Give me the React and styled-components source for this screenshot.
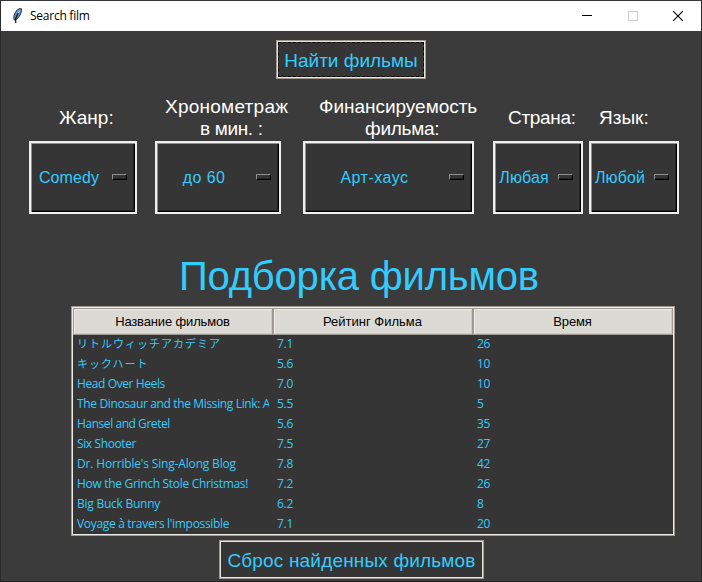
import React from "react";
import styled, { createGlobalStyle } from "styled-components";

const GlobalStyle = createGlobalStyle`
  * { box-sizing: border-box; }
  body { margin: 0; background: #3b3b3b; }
  button { margin: 0; padding: 0; border: 0; background: none; }
`;

const Window = styled.main`
  width: 702px;
  height: 582px;
  display: flex;
  flex-direction: column;
  border: 1px solid #2b2b2d;
  border-top-color: #36363f;
  border-bottom-color: #222222;
  background: #3b3b3b;
  font-family: "Liberation Sans", Arial, sans-serif;
  overflow: hidden;
`;

const TitleBar = styled.header`
  height: 30px;
  flex: none;
  display: flex;
  align-items: center;
  padding-left: 8px;
  background: #ffffff;
`;

const AppIcon = styled.svg`
  width: 16px;
  height: 16px;
  flex: none;
`;

const WindowTitle = styled.h1`
  margin: 0 auto 0 5px;
  font: 400 12px/16px "Open Sans", "Noto Sans", sans-serif;
  letter-spacing: -0.25px;
  color: #000000;
`;

const Caption = styled.button`
  width: 45.5px;
  height: 30px;
  display: flex;
  align-items: center;
  justify-content: center;
`;

const ActionButton = styled.button`
  flex: none;
  align-self: flex-start;
  width: ${(p) => p.$width}px;
  height: 39px;
  margin: ${(p) => p.$top}px 0 0 ${(p) => p.$left}px;
  border: 1px solid #9e9a91;
  box-shadow: inset 0 0 0 1px #e8e5df;
  padding: 1px;
  background: #353535;
`;

const ActionFace = styled.span`
  height: 100%;
  display: flex;
  align-items: center;
  justify-content: center;
  padding-top: 2px;
  border: 1px ${(p) => (p.$focused ? "dashed #000000" : "solid transparent")};
  color: #33ccff;
  font: 400 19px/22px "Liberation Sans", Arial, sans-serif;
  letter-spacing: ${(p) => p.$spacing}px;
  white-space: nowrap;
`;

const Filters = styled.section`
  flex: none;
  display: flex;
  height: 135px;
  padding-left: 28px;
`;

const Field = styled.div`
  width: ${(p) => p.$width}px;
  margin-right: ${(p) => p.$gap}px;
  flex: none;
  display: flex;
  flex-direction: column;
`;

const Label = styled.div`
  height: 62px;
  padding-top: 16px;
  display: flex;
  flex-direction: column;
  justify-content: center;
  color: #ffffff;
  font-size: 19px;
  line-height: 22px;
  white-space: nowrap;
`;

const LabelLine = styled.span`
  margin-left: ${(p) => p.$left}px;
  letter-spacing: ${(p) => p.$spacing || 0}px;
`;

const Select = styled.button`
  width: 100%;
  height: 73px;
  border: 2px solid #f0f0f0;
  box-shadow: inset 1px 1px 0 #8f8f8f, inset -1px -1px 0 #000000, inset -2px -2px 0 #222222;
  display: flex;
  align-items: center;
  padding: 0 8px 0 1px;
  background: #353535;
`;

const SelectValue = styled.span`
  flex: 1;
  text-align: center;
  color: #33ccff;
  font: 400 16px/18px "Liberation Sans", Arial, sans-serif;
  letter-spacing: ${(p) => p.$spacing}px;
  margin-right: 6px;
  white-space: nowrap;
`;

const Indicator = styled.span`
  width: 15px;
  height: 6px;
  flex: none;
  margin-bottom: 1px;
  border: 1px solid #000000;
  border-top-color: #8f8f8f;
  border-left-color: #8f8f8f;
  box-shadow: inset -1px -1px 0 #222222;
`;

const Heading = styled.h2`
  margin: 39px 0 7px 178px;
  flex: none;
  color: #33ccff;
  font-weight: 400;
  font-size: 40px;
  line-height: 46px;
  letter-spacing: -0.2px;
  white-space: nowrap;
`;

const Table = styled.section`
  flex: none;
  width: 604px;
  height: 230px;
  margin-left: 70px;
  border: 1px solid #9e9a91;
  box-shadow: inset 0 0 0 1px #eeebe7;
  padding: 1px;
  background: #353535;
`;

const HeaderRow = styled.div`
  display: grid;
  grid-template-columns: repeat(3, 200px);
  height: 26px;
`;

const HeaderCell = styled.div`
  border: 1px solid #9e9a91;
  box-shadow: inset 1px 1px 0 #eeebe7, inset -1px -1px 0 #cfcbc3;
  background: #dcdad5;
  color: #000000;
  font-size: 13px;
  line-height: 25px;
  padding-right: 1px;
  letter-spacing: ${(p) => p.$spacing}px;
  text-align: center;
`;

const Row = styled.div`
  display: grid;
  grid-template-columns: repeat(3, 200px);
  height: 20px;
`;

const Cell = styled.div`
  margin: 0 4px;
  height: 20px;
  overflow: hidden;
  white-space: nowrap;
  color: #33ccff;
  font: 400 ${(p) => p.$size || 12}px/20px "Open Sans", "Noto Sans", "Noto Sans CJK JP", sans-serif;
  letter-spacing: ${(p) => p.$spacing || 0}px;
`;

const filters = [
  { lines: [["Жанр:", 30]], value: "Comedy", spacing: 0.1, width: 108, gap: 18 },
  { lines: [["Хронометраж", 10, 0.25], ["в мин. :", 45, -0.35]], value: "до 60", spacing: 0.4, width: 126, gap: 22 },
  { lines: [["Финансируемость", 16, -0.03], ["фильма:", 62, -0.25]], value: "Арт-хаус", spacing: 0.5, width: 171, gap: 19 },
  { lines: [["Страна:", 15, -0.3]], value: "Любая", spacing: 0.1, width: 90, gap: 6 },
  { lines: [["Язык:", 10]], value: "Любой", spacing: 0.1, width: 90, gap: 0 },
];

const films = [
  { name: "リトルウィッチアカデミア", rating: "7.1", time: "26", size: 11, spacing: 1 },
  { name: "キックハート", rating: "5.6", time: "10", size: 11, spacing: 1 },
  { name: "Head Over Heels", rating: "7.0", time: "10", spacing: -0.4 },
  { name: "The Dinosaur and the Missing Link: A", rating: "5.5", time: "5", spacing: -0.36 },
  { name: "Hansel and Gretel", rating: "5.6", time: "35", spacing: -0.44 },
  { name: "Six Shooter", rating: "7.5", time: "27", spacing: -0.38 },
  { name: "Dr. Horrible's Sing-Along Blog", rating: "7.8", time: "42", spacing: -0.17 },
  { name: "How the Grinch Stole Christmas!", rating: "7.2", time: "26", spacing: -0.31 },
  { name: "Big Buck Bunny", rating: "6.2", time: "8", spacing: -0.25 },
  { name: "Voyage à travers l'impossible", rating: "7.1", time: "20", spacing: -0.32 },
];

function Feather() {
  return (
    <AppIcon viewBox="0 0 16 16">
      <path d="M5.2 12C4 8.500 6 3 10 .8c1-.5 2.500-.6 2.500.2C12.500 5 10.500 9.500 6.500 12z" fill="#5b93d3" stroke="#252b33" strokeWidth="1" />
      <path d="M10.800 2.500 8.500 6" stroke="#bcd8f2" strokeWidth="1" fill="none" />
      <path d="M9.200 5 6.700 10.500V15" stroke="#111111" strokeWidth="1.200" fill="none" />
    </AppIcon>
  );
}

export default function App() {
  return (
    <>
      <GlobalStyle />
      <Window>
        <TitleBar>
          <Feather />
          <WindowTitle>Search film</WindowTitle>
          <Caption aria-label="Minimize">
            <svg width="10" height="10" shapeRendering="crispEdges">
              <path d="M0 4h10v1H0z" fill="#000" />
            </svg>
          </Caption>
          <Caption aria-label="Maximize">
            <svg width="10" height="10" shapeRendering="crispEdges">
              <path d="M.5 .5h9v9h-9z" fill="none" stroke="#cccccc" />
            </svg>
          </Caption>
          <Caption aria-label="Close">
            <svg width="10" height="10">
              <path d="M0 0 10 10M10 0 0 10" stroke="#000" strokeWidth="1.1" />
            </svg>
          </Caption>
        </TitleBar>
        <ActionButton $width={150} $top={9} $left={275}>
          <ActionFace $focused $spacing={0}>Найти фильмы</ActionFace>
        </ActionButton>
        <Filters>
          {filters.map((f) => (
            <Field key={f.value} $width={f.width} $gap={f.gap}>
              <Label>
                {f.lines.map(([text, left, spacing]) => (
                  <LabelLine key={text} $left={left} $spacing={spacing}>{text}</LabelLine>
                ))}
              </Label>
              <Select>
                <SelectValue $spacing={f.spacing}>{f.value}</SelectValue>
                <Indicator />
              </Select>
            </Field>
          ))}
        </Filters>
        <Heading>Подборка фильмов</Heading>
        <Table>
          <HeaderRow>
            <HeaderCell $spacing={-0.15}>Название фильмов</HeaderCell>
            <HeaderCell $spacing={0}>Рейтинг Фильма</HeaderCell>
            <HeaderCell $spacing={-0.1}>Время</HeaderCell>
          </HeaderRow>
          {films.map((film) => (
            <Row key={film.name}>
              <Cell $size={film.size} $spacing={film.spacing}>{film.name}</Cell>
              <Cell $spacing={-0.3}>{film.rating}</Cell>
              <Cell $spacing={-0.3}>{film.time}</Cell>
            </Row>
          ))}
        </Table>
        <ActionButton $width={265} $top={4} $left={218}>
          <ActionFace $spacing={0.17}>Сброс найденных фильмов</ActionFace>
        </ActionButton>
      </Window>
    </>
  );
}
